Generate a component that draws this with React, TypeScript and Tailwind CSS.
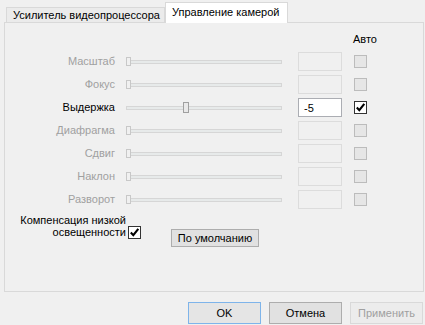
import React from "react";

type Row = {
  label: string;
  enabled: boolean;
  value?: string;
  thumb: number;
  auto?: boolean;
};

const rows: Row[] = [
  { label: "Масштаб", enabled: false, thumb: 0 },
  { label: "Фокус", enabled: false, thumb: 0 },
  { label: "Выдержка", enabled: true, value: "-5", thumb: 57, auto: true },
  { label: "Диафрагма", enabled: false, thumb: 0 },
  { label: "Сдвиг", enabled: false, thumb: 0 },
  { label: "Наклон", enabled: false, thumb: 0 },
  { label: "Разворот", enabled: false, thumb: 0 },
];

function Check() {
  return (
    <svg width="11" height="11" viewBox="0 0 11 11" className="block">
      <path d="M1.8 5.6 L4.3 8.2 L9.3 1.8" fill="none" stroke="#000" strokeWidth="2.1" />
    </svg>
  );
}

function CheckBox({ checked, enabled }: { checked?: boolean; enabled: boolean }) {
  return (
    <div
      className={
        enabled
          ? "flex h-[13px] w-[13px] items-center justify-center border border-[#333333] bg-white"
          : "flex h-[13px] w-[13px] items-center justify-center border border-[#bcbcbc] bg-[#e6e6e6]"
      }
    >
      {checked && <Check />}
    </div>
  );
}

function Slider({ thumb, enabled }: { thumb: number; enabled: boolean }) {
  return (
    <div className="relative h-[19px] w-[156px]">
      <div className="absolute left-0 right-0 top-[8px] h-[4px] border border-[#d6d6d6] bg-[#e7eaea]" />
      <div
        className={
          enabled
            ? "absolute top-[4px] h-[11px] w-[6px] border border-[#a0a0a0] bg-[#e9e9e9]"
            : "absolute top-[5px] h-[9px] w-[5px] border border-[#c8c8c8] bg-[#f0f0f0]"
        }
        style={{ left: thumb }}
      />
    </div>
  );
}

export default function App() {
  return (
    <div
      className="flex h-[325px] w-[425px] flex-col whitespace-nowrap bg-[#f0f0f0] pl-[4px] pr-[2px] pt-[2px] text-[11px] leading-[12px] text-black"
      style={{ fontFamily: '"Liberation Sans", Arial, sans-serif' }}
    >
      <div className="flex items-end pl-[2px]">
        <div className="flex h-[15px] w-[159px] items-center border border-b-0 border-[#d9d9d9] bg-[#ebebeb] pl-[6px]">
          Усилитель видеопроцессора
        </div>
        <div className="relative z-10 -mb-px flex h-[21px] w-[123px] items-center border border-b-0 border-[#d9d9d9] bg-white pb-[2px] pl-[6px]">
          Управление камерой
        </div>
      </div>

      <div className="flex h-[270px] w-[420px] flex-col border border-[#d9d9d9] bg-[#f0f0f0] pt-[4px]">
        <div className="flex h-[23px] items-center pl-[348px]">Авто</div>

        {rows.map((r) => (
          <div key={r.label} className="flex h-[23px] items-center">
            <div
              className={
                r.enabled
                  ? "w-[110px] pb-[2px] text-right text-black"
                  : "w-[110px] pb-[2px] text-right text-[#a0a0a0]"
              }
            >
              {r.label}
            </div>
            <div className="ml-[11px]">
              <Slider thumb={r.thumb} enabled={r.enabled} />
            </div>
            <div
              className={
                r.enabled
                  ? "ml-[16px] flex h-[19px] w-[44px] items-center border border-[#abadb3] bg-white pl-[5px]"
                  : "ml-[16px] flex h-[19px] w-[44px] items-center border border-[#dcdcdc] bg-[#f0f0f0] pl-[5px]"
              }
            >
              {r.value}
            </div>
            <div className="ml-[12px]">
              <CheckBox enabled={r.enabled} checked={r.auto} />
            </div>
          </div>
        ))}

        <div className="mt-[3px] flex items-start">
          <div className="flex items-end">
            <div className="w-[121px] text-right leading-[12px]">
              Компенсация низкой
              <br />
              освещенности
            </div>
            <div className="mb-[-1px] ml-[2px]">
              <CheckBox enabled checked />
            </div>
          </div>
          <button className="ml-[30px] mt-[15px] flex h-[18px] w-[88px] items-center justify-center border border-[#adadad] bg-[#e1e1e1]">
            По умолчанию
          </button>
        </div>
      </div>

      <div className="mt-[10px] flex justify-end gap-[8px]">
        <button className="flex h-[22px] w-[73px] items-center justify-center border border-[#7eb4ea] bg-[#e5e5e5]">
          OK
        </button>
        <button className="flex h-[22px] w-[73px] items-center justify-center border border-[#adadad] bg-[#e1e1e1]">
          Отмена
        </button>
        <button className="flex h-[22px] w-[73px] items-center justify-center border border-[#d9d9d9] bg-[#ececec] text-[#a0a0a0]">
          Применить
        </button>
      </div>
    </div>
  );
}
